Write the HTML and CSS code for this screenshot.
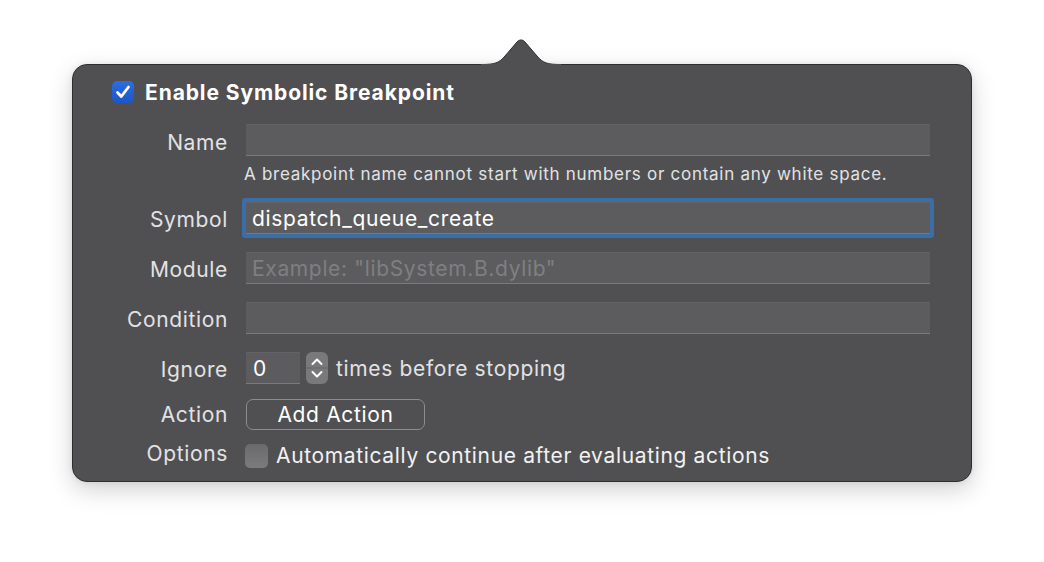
FILE: index.html
```html
<!DOCTYPE html>
<html>
<head>
<meta charset="utf-8">
<link rel="stylesheet" href="styles.css">
</head>
<body>
<div class="popover">
  <svg class="arrow" width="80" height="26" viewBox="0 0 80 26">
    <path d="M0 25.5 C14 25.5 18 24 24 17 L36 3 C38.5 0.3 41.5 0.3 44 3 L56 17 C62 24 66 25.5 80 25.5" fill="#505052" stroke="#2e2e30" stroke-width="1"/>
    <rect x="0" y="25" width="80" height="2" fill="#505052"/>
  </svg>
  <div class="header">
    <span class="check on">
      <svg width="22" height="22" viewBox="0 0 22 22"><path d="M5.5 11.5 L9.3 15.5 L16.5 6" fill="none" stroke="#fff" stroke-width="2.8" stroke-linecap="round" stroke-linejoin="round"/></svg>
    </span>
    <span class="title">Enable Symbolic Breakpoint</span>
  </div>
  <div class="row r-name">
    <span class="label">Name</span>
    <div class="field"></div>
  </div>
  <div class="row r-help">
    <span class="label"></span>
    <span class="help">A breakpoint name cannot start with numbers or contain any white space.</span>
  </div>
  <div class="row r-field">
    <span class="label">Symbol</span>
    <div class="field focus"><span class="value">dispatch_queue_create</span></div>
  </div>
  <div class="row r-field">
    <span class="label">Module</span>
    <div class="field"><span class="placeholder">Example: "libSystem.B.dylib"</span></div>
  </div>
  <div class="row r-field">
    <span class="label">Condition</span>
    <div class="field"></div>
  </div>
  <div class="row r-field">
    <span class="label">Ignore</span>
    <div class="field small"><span class="value">0</span></div>
    <span class="stepper">
      <svg width="22" height="32" viewBox="0 0 22 32">
        <path d="M6.5 12 L11 7.5 L15.5 12" fill="none" stroke="#fff" stroke-width="2" stroke-linecap="round" stroke-linejoin="round"/>
        <line x1="0" y1="16" x2="22" y2="16" stroke="#666668" stroke-width="1"/>
        <path d="M6.5 20 L11 24.5 L15.5 20" fill="none" stroke="#fff" stroke-width="2" stroke-linecap="round" stroke-linejoin="round"/>
      </svg>
    </span>
    <span class="text">times before stopping</span>
  </div>
  <div class="row r-action">
    <span class="label">Action</span>
    <button class="btn">Add Action</button>
  </div>
  <div class="row r-options">
    <span class="label opt-label">Options</span>
    <span class="check off"></span>
    <span class="text">Automatically continue after evaluating actions</span>
  </div>
</div>
</body>
</html>
```
FILE: styles.css
```css
html, body {
  margin: 0;
  padding: 0;
  background: #ffffff;
}
body {
  font-family: Inter, "Noto Sans", "Liberation Sans", sans-serif;
  width: 1044px;
  height: 562px;
  overflow: hidden;
}
.popover {
  position: relative;
  margin: 64px 0 0 72px;
  width: 900px;
  height: 418px;
  box-sizing: border-box;
  background: #505052;
  border: 1px solid #2e2e30;
  border-radius: 15px;
  box-shadow: 0 8px 24px rgba(0,0,0,0.18), 0 0 6px rgba(0,0,0,0.08);
  padding: 16px 41px 0 0;
  color: #e2e2e4;
  font-size: 21px;
  letter-spacing: 0.65px;
}
.arrow {
  position: absolute;
  left: 408px;
  top: -26px;
}
.header {
  display: flex;
  align-items: center;
  margin-left: 39px;
  height: 22px;
}
.check {
  width: 22px;
  height: 22px;
  border-radius: 5px;
  flex: none;
  display: block;
}
.check.on {
  background: linear-gradient(#2c6de0, #1b56c8);
}
.check.off {
  width: 23px;
  height: 24px;
  background: linear-gradient(#6a6a6c, #7b7b7d);
}
.title {
  margin-left: 11px;
  font-weight: 700;
  color: #ffffff;
  font-size: 21px;
  letter-spacing: 0.9px;
}
.row {
  display: flex;
  align-items: center;
  gap: 18px;
}
.label {
  width: 155px;
  flex: none;
  text-align: right;
}
.field {
  flex: 1;
  height: 32px;
  box-sizing: border-box;
  background: #5c5c5e;
  border-top: 1px solid #626264;
  border-bottom: 1px solid #7a7a7c;
  display: flex;
  align-items: center;
  padding-left: 6px;
}
.field.focus {
  box-shadow: 0 0 0 4px #3b6ea6;
  border-radius: 1px;
}
.field.small {
  flex: none;
  width: 54px;
  padding-left: 7px;
}
.value {
  color: #ffffff;
}
.placeholder {
  color: #7f7f81;
}
.r-name {
  margin-top: 21px;
}
.r-name .label {
  padding-top: 4px;
}
.r-help {
  margin-top: 8px;
  height: 20px;
}
.help {
  font-size: 17px;
  letter-spacing: 0.72px;
  margin-left: -2px;
}
.r-field {
  margin-top: 18px;
}
.r-field .label {
  padding-top: 2px;
}
.stepper {
  width: 22px;
  height: 32px;
  border-radius: 6px;
  background: #79797b;
  margin-left: -12px;
  display: block;
}
.stepper svg {
  display: block;
}
.r-field .text {
  margin-left: -10px;
}
.r-action {
  margin-top: 15px;
}
.btn {
  width: 179px;
  height: 31px;
  box-sizing: border-box;
  border: 1.5px solid #8c8c8e;
  border-radius: 7px;
  background: transparent;
  color: #ffffff;
  font-family: inherit;
  font-size: 21px;
  letter-spacing: 0.65px;
  padding: 0;
}
.r-options {
  margin-top: 13px;
}
.opt-label {
  margin-top: -5px;
}
.r-options .check {
  margin-left: -1px;
}
.r-options .text {
  margin-left: -10px;
  color: #f2f2f2;
}
```
